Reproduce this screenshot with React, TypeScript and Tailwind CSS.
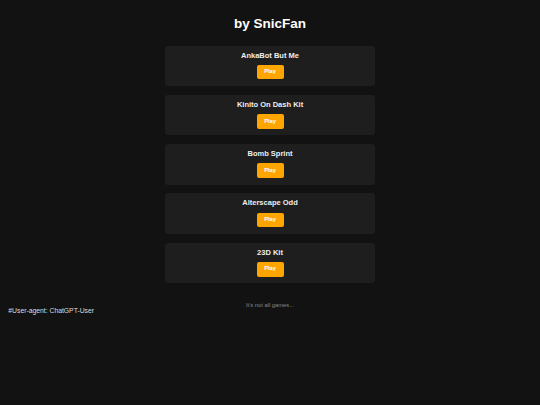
const games = ['AnkaBot But Me', 'Kinito On Dash Kit', 'Bomb Sprint', 'Alterscape Odd', '23D Kit'];

export default function App() {
  return (
    <div className="min-h-screen bg-[#121212] pt-[15px] font-['Liberation_Sans',Arial,sans-serif]">
      <h1 className="text-center text-[13.5px] font-bold leading-[18px] text-white">by SnicFan</h1>

      <div className="mx-auto mt-[12.5px] flex w-[210px] flex-col gap-[8.6px]">
        {games.map((name) => (
          <div key={name} className="flex h-[40.7px] flex-col items-center rounded-[3px] bg-[#1e1e1e] pt-[6px]">
            <p className="text-[7.5px] font-bold leading-[8.4px] text-[#eeeeee]">{name}</p>
            <button className="mt-[5px] h-[14.5px] w-[27px] rounded-[2px] bg-[#ffa500] text-[5.7px] font-bold leading-none text-white">
              Play
            </button>
          </div>
        ))}
      </div>

      <p className="mt-[18.4px] text-center text-[5.8px] leading-[6px] text-[#888888]">It's not all games...</p>
      <p className="pl-[8.3px] text-[6.8px] leading-[6px] text-[#dddddd]">#User-agent: ChatGPT-User</p>
    </div>
  );
}
